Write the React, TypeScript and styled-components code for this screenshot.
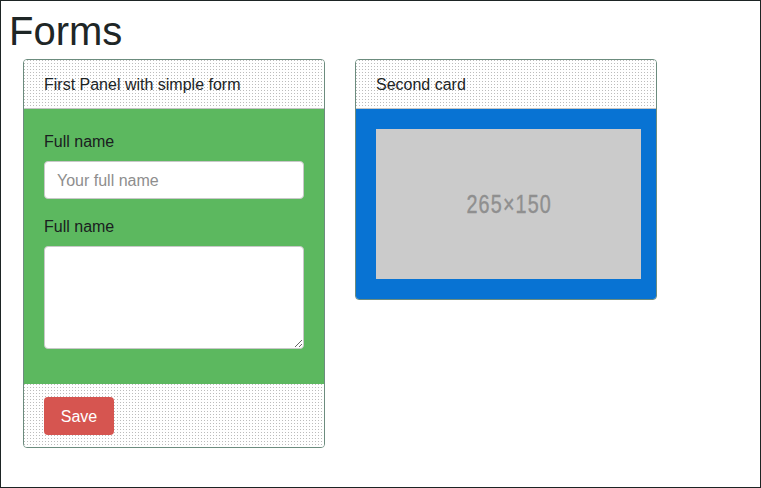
import React from "react";
import styled, { createGlobalStyle } from "styled-components";

const GlobalStyle = createGlobalStyle`
  html, body { margin: 0; padding: 0; }
  body {
    font-family: "Liberation Sans", Arial, sans-serif;
    font-size: 16px;
    line-height: 1.5;
    color: #212529;
    background: #fff;
  }
  * { box-sizing: border-box; }
`;

const Page = styled.div`
  width: 761px;
  height: 488px;
  border: 1px solid #1d2424;
  padding: 8px 0 0 8px;
  overflow: hidden;
`;

const Title = styled.h1`
  margin: 0 0 6px;
  font-size: 40px;
  line-height: 44px;
  font-weight: 400;
  color: #1e2626;
`;

const CardRow = styled.div`
  display: flex;
  align-items: flex-start;
  gap: 30px;
  margin-left: 14px;
`;

const Card = styled.div`
  width: 302px;
  border: 1px solid #6c8c7e;
  border-radius: 4px;
  overflow: hidden;
  display: flex;
  flex-direction: column;
  background: #fff;
`;

const dots = `
  background-color: #fff;
  background-image: conic-gradient(at 1px 1px, transparent 75%, #bcbcbc 0);
  background-size: 3px 3px;
`;

const CardHeader = styled.div`
  ${dots}
  padding: 13px 20px 11px;
  line-height: 24px;
  border-bottom: 1px solid #c4c4c4;
  color: #1c2424;
`;

const CardBody = styled.div<{ $bg: string }>`
  background: ${(p) => p.$bg};
  padding: 20px;
`;

const CardFooter = styled.div`
  ${dots}
  padding: 13px 20px 12px;
`;

const FormGroup = styled.div`
  margin-bottom: 15px;
`;

const Label = styled.label`
  display: block;
  padding-top: 1px;
  margin-bottom: 7px;
  line-height: 24px;
  color: #1a2020;
`;

const Input = styled.input`
  display: block;
  width: 260px;
  height: 38px;
  padding: 7px 12px 5px;
  font-family: inherit;
  font-size: 16px;
  line-height: 24px;
  color: #495057;
  background: #fff;
  border: 1px solid #c8c8c8;
  border-radius: 4px;
  outline: none;
  &::placeholder { color: #8e8e8e; }
`;

const TextArea = styled.textarea`
  display: block;
  width: 260px;
  height: 103px;
  padding: 6px 12px;
  font-family: inherit;
  font-size: 16px;
  background: #fff;
  border: 1px solid #c8c8c8;
  border-radius: 4px;
  outline: none;
`;

const SaveButton = styled.button`
  width: 70px;
  height: 38px;
  padding: 1px 0 0;
  border: none;
  border-radius: 4px;
  background: #d65550;
  color: #fff;
  font-family: inherit;
  font-size: 16px;
  line-height: 24px;
  cursor: pointer;
`;

const Placeholder = styled.div`
  width: 265px;
  height: 150px;
  background: #cbcbcb;
  display: flex;
  align-items: center;
  justify-content: center;
`;

const PlaceholderText = styled.span`
  display: inline-block;
  font-family: "Liberation Sans", Arial, sans-serif;
  font-weight: 400;
  font-size: 26px;
  line-height: 30px;
  color: #8f8f8f;
  letter-spacing: 1.5px;
  transform: scaleX(0.76);
  margin: 0 0 0 2px;
  -webkit-text-stroke: 0.4px #8f8f8f;
`;

export default function App() {
  return (
    <>
      <GlobalStyle />
      <Page>
        <Title>Forms</Title>
        <CardRow>
          <Card>
            <CardHeader>First Panel with simple form</CardHeader>
            <CardBody $bg="#5cb85f">
              <FormGroup>
                <Label>Full name</Label>
                <Input placeholder="Your full name" />
              </FormGroup>
              <FormGroup>
                <Label>Full name</Label>
                <TextArea />
              </FormGroup>
            </CardBody>
            <CardFooter>
              <SaveButton>Save</SaveButton>
            </CardFooter>
          </Card>
          <Card>
            <CardHeader>Second card</CardHeader>
            <CardBody $bg="#0873d3">
              <Placeholder>
                <PlaceholderText>265×150</PlaceholderText>
              </Placeholder>
            </CardBody>
          </Card>
        </CardRow>
      </Page>
    </>
  );
}
